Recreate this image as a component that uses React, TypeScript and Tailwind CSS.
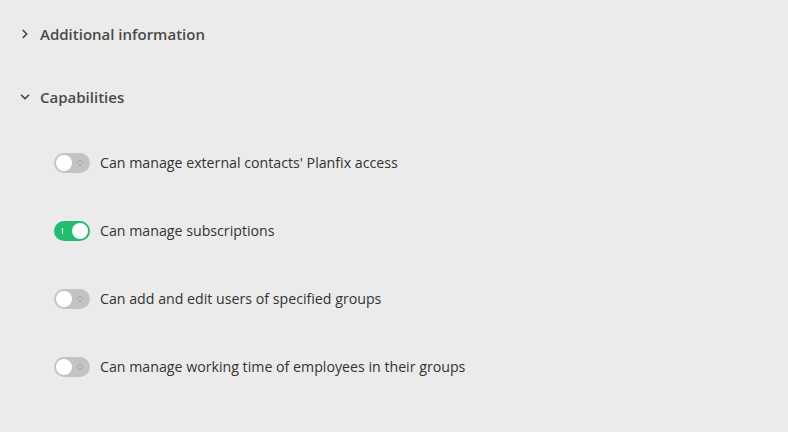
import { ChevronDown, ChevronRight } from 'lucide-react';

interface ToggleProps {
  on: boolean;
}

function Toggle({ on }: ToggleProps) {
  return (
    <div
      className={`relative h-5 w-9 shrink-0 rounded-full ${on ? 'bg-[#20bd6c]' : 'bg-[#c3c3c3]'}`}
    >
      {on ? (
        <>
          <span className="absolute left-[8px] top-[7px] h-[6px] w-px bg-white" />
          <span className="absolute right-[2px] top-[2px] h-4 w-4 rounded-full bg-white" />
        </>
      ) : (
        <>
          <span className="absolute left-[2px] top-[2px] h-4 w-4 rounded-full bg-white" />
          <span className="absolute right-[7px] top-[7px] h-[6px] w-[6px] rounded-full border border-[#a8a8a8]" />
        </>
      )}
    </div>
  );
}

const capabilities = [
  { label: "Can manage external contacts' Planfix access", on: false },
  { label: 'Can manage subscriptions', on: true },
  { label: 'Can add and edit users of specified groups', on: false },
  { label: 'Can manage working time of employees in their groups', on: false },
];

export default function App() {
  return (
    <div
      className="h-[432px] w-[788px] bg-[#ebebeb] text-[#333]"
      style={{ fontFamily: '"Open Sans", "Noto Sans", sans-serif' }}
    >
      <div className="flex h-[68px] items-center gap-[8px] pl-[18px]">
        <ChevronRight className="h-[14px] w-[14px] text-[#444]" strokeWidth={3} />
        <span className="text-[15px] font-semibold text-[#4a4a4a]">Additional information</span>
      </div>
      <div className="flex h-[60px] items-center gap-[8px] pl-[18px] pb-[2px]">
        <ChevronDown className="h-[14px] w-[14px] text-[#444]" strokeWidth={3} />
        <span className="text-[15px] font-semibold text-[#4a4a4a]">Capabilities</span>
      </div>
      <div className="flex flex-col pl-[54px] pt-[1px]">
        {capabilities.map((c) => (
          <div key={c.label} className="flex h-[68px] items-center gap-[10px]">
            <Toggle on={c.on} />
            <span className="text-[14.2px] text-[#333]">{c.label}</span>
          </div>
        ))}
      </div>
    </div>
  );
}
